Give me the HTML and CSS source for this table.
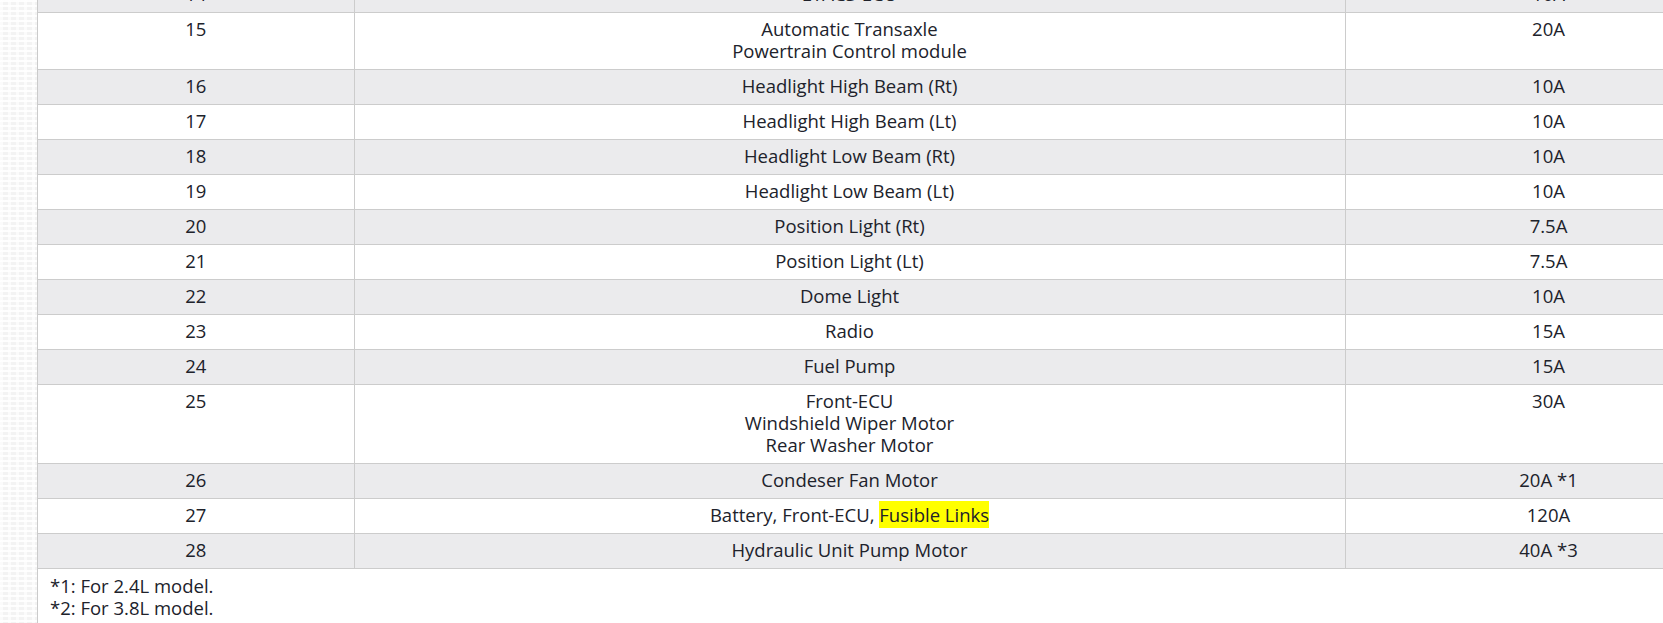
FILE: index.html
```html
<!DOCTYPE html>
<html lang="en">
<head>
<meta charset="utf-8">
<title>Fuse table</title>
<link rel="stylesheet" href="styles.css">
</head>
<body>
<div class="layout">
  <div class="side"></div>
  <main class="content">
    <table class="fuses">
      <colgroup>
        <col class="c-no">
        <col class="c-desc">
        <col class="c-amp">
      </colgroup>
      <tbody>
        <tr><td>14</td><td>ETACS-ECU</td><td>10A</td></tr>
        <tr><td>15</td><td>Automatic Transaxle<br>Powertrain Control module</td><td>20A</td></tr>
        <tr><td>16</td><td>Headlight High Beam (Rt)</td><td>10A</td></tr>
        <tr><td>17</td><td>Headlight High Beam (Lt)</td><td>10A</td></tr>
        <tr><td>18</td><td>Headlight Low Beam (Rt)</td><td>10A</td></tr>
        <tr><td>19</td><td>Headlight Low Beam (Lt)</td><td>10A</td></tr>
        <tr><td>20</td><td>Position Light (Rt)</td><td>7.5A</td></tr>
        <tr><td>21</td><td>Position Light (Lt)</td><td>7.5A</td></tr>
        <tr><td>22</td><td>Dome Light</td><td>10A</td></tr>
        <tr><td>23</td><td>Radio</td><td>15A</td></tr>
        <tr><td>24</td><td>Fuel Pump</td><td>15A</td></tr>
        <tr><td>25</td><td>Front-ECU<br>Windshield Wiper Motor<br>Rear Washer Motor</td><td>30A</td></tr>
        <tr><td>26</td><td>Condeser Fan Motor</td><td>20A *1</td></tr>
        <tr><td>27</td><td>Battery, Front-ECU, <mark class="hl">Fusible Links</mark></td><td>120A</td></tr>
        <tr><td>28</td><td>Hydraulic Unit Pump Motor</td><td>40A *3</td></tr>
      </tbody>
    </table>
    <div class="notes">
      <p>*1: For 2.4L model.</p>
      <p>*2: For 3.8L model.</p>
    </div>
  </main>
</div>
</body>
</html>
```

FILE: styles.css
```css
html, body {
  margin: 0;
  padding: 0;
  overflow: hidden;
  background: #ffffff;
}

body {
  font-family: "Open Sans", "Noto Sans", sans-serif;
  font-size: 18.5px;
  line-height: 22px;
  color: #20222b;
}

.layout {
  display: flex;
  width: 1760px;
  min-height: 700px;
  margin-top: -23px;
}

.side {
  flex: 0 0 37px;
  background-color: #f3f3f3;
  background-image:
    repeating-linear-gradient(0deg, rgba(255,255,255,0.9) 0 2px, transparent 2px 5px),
    repeating-linear-gradient(90deg, rgba(255,255,255,0.7) 0 3px, transparent 3px 8px);
}

.content {
  flex: 1 1 auto;
  border-left: 1px solid #cbcbcb;
  background: #ffffff;
}

.fuses {
  border-collapse: collapse;
  table-layout: fixed;
  width: 1714px;
}

.c-no { width: 316px; }
.c-desc { width: 991px; }
.c-amp { width: 407px; }

.fuses td {
  border: 1px solid #cccccc;
  padding: 5px 8px 7px;
  text-align: center;
  vertical-align: top;
}

.fuses td:first-child {
  border-left: 0;
}

.fuses tr:nth-child(odd) td {
  background: #ebebed;
}

.hl {
  background: #ffff00;
  color: inherit;
  padding: 1px 0;
}

.notes {
  padding: 6px 12px;
}

.notes p {
  margin: 0;
}
```
